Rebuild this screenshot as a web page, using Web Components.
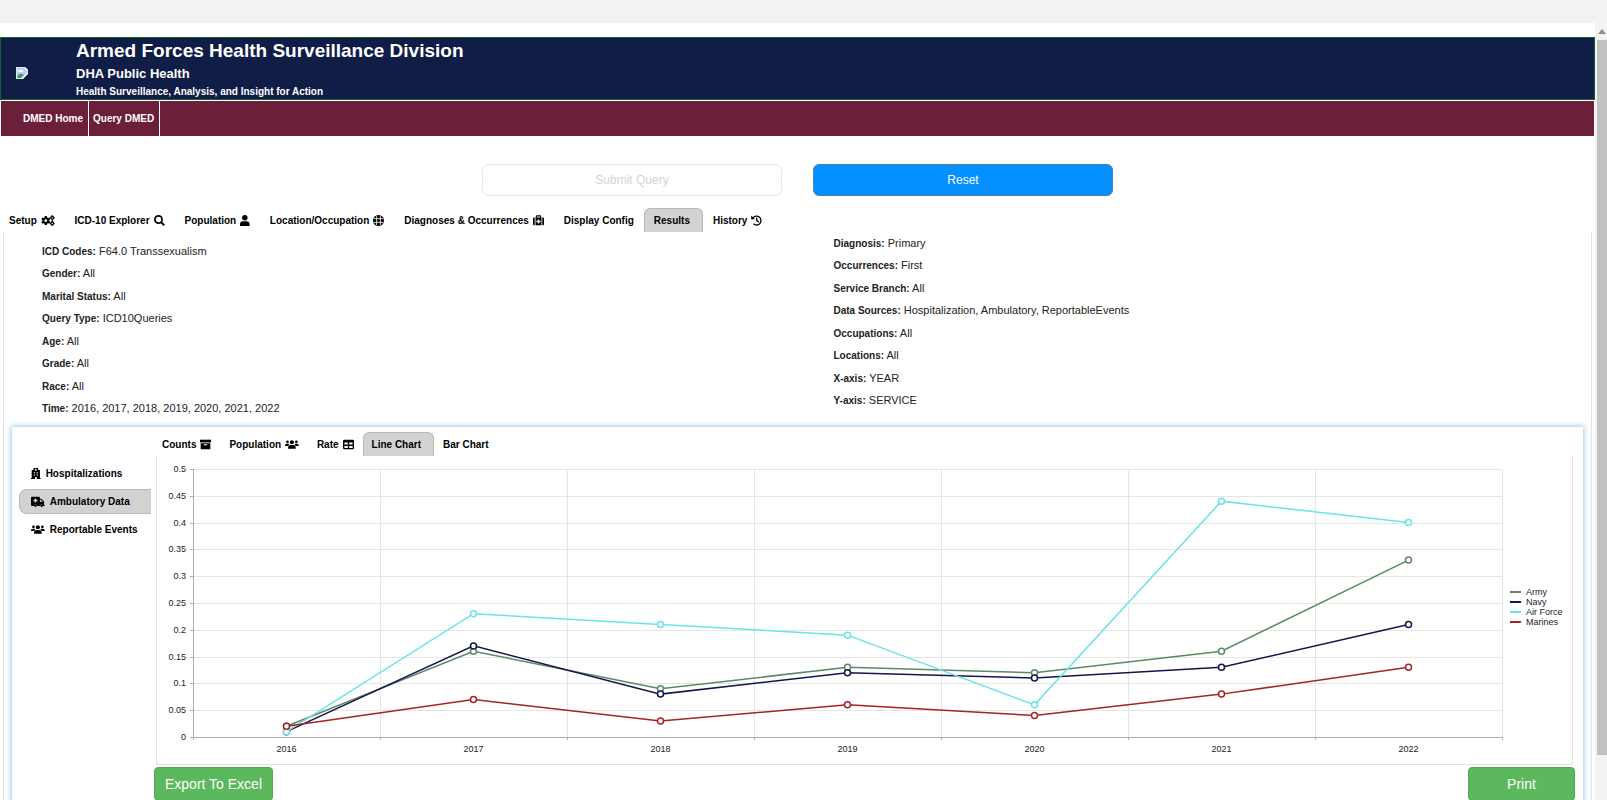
<!DOCTYPE html>
<html lang="en">
<head>
<meta charset="utf-8">
<title>DMED - Query Results</title>
<style>
    html, body {
        margin: 0;
        height: 100%;
        overflow: hidden;
        background: #fff;
        font-family: "Liberation Sans", Arial, sans-serif;
        font-size: 10px;
        color: #222;
    }
    data-card tab-strip {
        --tab-pad: 8px;
        margin-left: -3px;
    }
</style>
</head>
<body>
<app-frame>
    <site-header>
        <span slot="title">Armed Forces Health Surveillance Division</span>
        <span slot="unit">DHA Public Health</span>
        <span slot="motto">Health Surveillance, Analysis, and Insight for Action</span>
    </site-header>
    <site-nav>
        <a href="#home">DMED Home</a>
        <a href="#query">Query DMED</a>
    </site-nav>
    <query-actions></query-actions>
    <tab-strip>
        <tab-item label="Setup" icon="cogs"></tab-item>
        <tab-item label="ICD-10 Explorer" icon="search"></tab-item>
        <tab-item label="Population" icon="user"></tab-item>
        <tab-item label="Location/Occupation" icon="globe"></tab-item>
        <tab-item label="Diagnoses &amp; Occurrences" icon="medkit"></tab-item>
        <tab-item label="Display Config"></tab-item>
        <tab-item label="Results" active></tab-item>
        <tab-item label="History" icon="history"></tab-item>
    </tab-strip>
    <results-panel>
        <query-summary slot="left" id="summary-left"></query-summary>
        <query-summary slot="right" id="summary-right"></query-summary>
        <data-card>
            <side-menu slot="side"></side-menu>
            <tab-strip>
                <tab-item label="Counts" icon="archive"></tab-item>
                <tab-item label="Population" icon="users"></tab-item>
                <tab-item label="Rate" icon="table"></tab-item>
                <tab-item label="Line Chart" active></tab-item>
                <tab-item label="Bar Chart"></tab-item>
            </tab-strip>
            <line-chart></line-chart>
            <chart-actions></chart-actions>
        </data-card>
    </results-panel>
</app-frame>

<script>
// Icon shapes, all on a 16px high grid
const ICONS = {
    cogs: { w: 20, body: '<path fill-rule="evenodd" d="M5.5 1.5h3l.4 2 1.3.7 1.9-.7 1.4 2.6L12 7.400v1.400l1.500 1.300-1.400 2.600-1.900-.7-1.300.7-.4 2h-3l-.4-2-1.300-.7-1.900.7L.5 10.100 2 8.800V7.400L.5 6.100l1.400-2.600 1.900.7 1.300-.7zM7 6a2.100 2.100 0 1 0 0 4.200A2.100 2.100 0 0 0 7 6z"/><g fill="none" stroke="currentColor" stroke-width="2"><circle cx="16.300" cy="4" r="2"/><circle cx="16.300" cy="12.200" r="2"/></g><path d="M15.500 0H17v2h-1.500zM15.500 6H17v4h-1.500zM15.500 14H17v2h-1.500zM12.700 3.300h1.500v1.400h-1.500zM18.500 3.300H20v1.400h-1.500zM12.700 11.500h1.500v1.400h-1.500zM18.500 11.500H20v1.400h-1.500z"/>' },
    search: { w: 16, body: '<circle cx="6.5" cy="6.5" r="5.3" fill="none" stroke="currentColor" stroke-width="2.4"/><path d="M9.5 11.5l2-2L16 14l-2 2z"/>' },
    user: { w: 14, body: '<circle cx="7" cy="4" r="4"/><path d="M0 16v-2.500A4.500 4.500 0 0 1 4.500 9h5a4.500 4.500 0 0 1 4.500 4.500V16z"/>' },
    globe: { w: 16, body: '<circle cx="8" cy="8" r="8"/><path d="M5.300 1.200v13.600M10.700 1.200v13.600M1 5.300h14M1 10.700h14" fill="none" stroke="#fff" stroke-width="1.2"/>' },
    medkit: { w: 16, body: '<path fill-rule="evenodd" d="M4 3.5V2A1.500 1.500 0 0 1 5.500.5h5A1.500 1.500 0 0 1 12 2v1.500h.3V15H3.700V3.500zM5.500 3.500h5V2h-5zM7 6.500v2H5v2h2v2h2v-2h2v-2H9v-2z"/><path d="M0 5a1.500 1.500 0 0 1 1.500-1.500h1V15h-1A1.500 1.500 0 0 1 0 13.500zM13.500 3.500h1A1.500 1.500 0 0 1 16 5v8.500a1.500 1.500 0 0 1-1.500 1.500h-1z"/>' },
    history: { w: 16, body: '<path d="M2.8 4.2A6.500 6.500 0 1 1 4 13.200M8.300 4.500V8l2.500 2" fill="none" stroke="currentColor" stroke-width="1.9" stroke-linecap="round"/><path d="M.3.8v5.500h5.500z"/>' },
    archive: { w: 16, body: '<path d="M0 1h16v4H0z"/><path fill-rule="evenodd" d="M1 6h14v9H1zM5.500 7.500v1.600h5V7.500z"/>' },
    users: { w: 20, body: '<circle cx="10" cy="4.8" r="3"/><path d="M4.500 14v-1.500A3.800 3.800 0 0 1 8.300 8.700h3.400a3.800 3.800 0 0 1 3.800 3.800V14z"/><circle cx="3.500" cy="4" r="2"/><circle cx="16.500" cy="4" r="2"/><path d="M0 9.500a2.700 2.700 0 0 1 2.700-2.700h2.600l.8 1.500L4.500 10H0zM20 9.500a2.700 2.700 0 0 0-2.700-2.700h-2.600l-.8 1.500 1.600 1.700H20z"/>' },
    table: { w: 16, body: '<path fill-rule="evenodd" d="M2 1h12a2 2 0 0 1 2 2v10a2 2 0 0 1-2 2H2a2 2 0 0 1-2-2V3a2 2 0 0 1 2-2zM2 5v3h5V5zM9 5v3h5V5zM2 10v3h5v-3zM9 10v3h5v-3z"/>' },
    hospital: { w: 14, body: '<path fill-rule="evenodd" d="M3.500 3V1a1 1 0 0 1 1-1h5a1 1 0 0 1 1 1v2H13v11.500h1V16H8.200v-3H5.800v3H0v-1.500h1V3zM6.400 1v1h-1v1.200h1v1h1.200v-1h1V2h-1V1zM4 6v1.700h2V6zM8 6v1.700h2V6zM4 9.300V11h2V9.300zM8 9.300V11h2V9.300z"/>' },
    ambulance: { w: 20, body: '<path fill-rule="evenodd" d="M1.500 1h10A1.500 1.500 0 0 1 13 2.500V4h2l4 4v5h1v1.500h-2.200a2.300 2.300 0 0 0-4.600 0H8.800a2.300 2.300 0 0 0-4.600 0H1.500A1.500 1.500 0 0 1 0 13V2.500A1.500 1.500 0 0 1 1.500 1zM5.500 3.500v2h-2v2h2v2h2v-2h2v-2h-2v-2zM13 5.500v3h4.300l-3-3z"/><circle cx="6.500" cy="14.300" r="1.700"/><circle cx="15.500" cy="14.300" r="1.700"/>' }
};

class GlyphIcon extends HTMLElement {
    constructor() {
        super();
        this.attachShadow({ mode: 'open' });
    }

    connectedCallback() {
        const icon = ICONS[this.getAttribute('name')];
        this.shadowRoot.innerHTML = `
            <style>
                :host { display: inline-flex; }
                svg { display: block; height: 11px; fill: currentColor; }
            </style>
            <svg viewBox="0 0 ${icon.w} 16" aria-hidden="true">${icon.body}</svg>
        `;
    }
}
customElements.define('glyph-icon', GlyphIcon);

class AppFrame extends HTMLElement {
    constructor() {
        super();
        this.attachShadow({ mode: 'open' }).innerHTML = `
            <style>
                :host { display: flex; flex-direction: column; height: 100vh; }
                .strip { flex: none; height: 23px; background: #f2f2f2; }
                .view { flex: 1; display: flex; min-height: 0; }
                main { flex: 1; min-width: 0; overflow: hidden; padding-top: 14px; }
                .scrollbar {
                    flex: none; width: 10px; padding-left: 2px;
                    display: flex; flex-direction: column; background: #f3f3f3;
                }
                .arrow { flex: none; height: 17px; display: flex; align-items: center; justify-content: center; }
                .arrow svg { width: 8px; height: 5px; fill: #8f8f8f; }
                .thumb { flex: 16; background: #c1c1c1; }
                .rest { flex: 1; }
            </style>
            <div class="strip"></div>
            <div class="view">
                <main><slot></slot></main>
                <div class="scrollbar" aria-hidden="true">
                    <div class="arrow"><svg viewBox="0 0 8 5"><path d="M4 0l4 5H0z"/></svg></div>
                    <div class="thumb"></div>
                    <div class="rest"></div>
                </div>
            </div>
        `;
    }
}
customElements.define('app-frame', AppFrame);

class SiteHeader extends HTMLElement {
    constructor() {
        super();
        this.attachShadow({ mode: 'open' }).innerHTML = `
            <style>
                :host {
                    display: flex; align-items: center; box-sizing: border-box; height: 63px;
                    border: 1px solid #17602c; background: #101d47; color: #fff; font-weight: bold;
                }
                .logo { width: 44px; padding: 8px 0 0 15px; margin-right: 16px; }
                .logo svg { display: block; width: 12px; height: 12px; }
                h1, h2, p { margin: 0; font-weight: bold; }
                h1 { font-size: 19px; line-height: 25px; }
                h2 { font-size: 13px; line-height: 21px; }
                p { font-size: 10px; line-height: 15px; }
            </style>
            <div class="logo">
                <svg viewBox="0 0 12 12" role="img" aria-label="Logo">
                    <path d="M0 0h9l3 3v9H0z" fill="#dce6f5"/>
                    <path d="M1 1h8v2h2v6H1z" fill="#b9d0f2"/>
                    <path d="M2 5q0-2 2-2 2-1 3 1v1z" fill="#fff"/>
                    <path d="M1 11q1-5 5-4l2 1-3 3z" fill="#4b9a52"/>
                    <path d="M5 12l7-7v2l-5 5z" fill="#fff"/>
                    <path d="M7 12l5-5v5z" fill="#101d47"/>
                    <path d="M9 0v3h3z" fill="#fff"/>
                </svg>
            </div>
            <div>
                <h1><slot name="title"></slot></h1>
                <h2><slot name="unit"></slot></h2>
                <p><slot name="motto"></slot></p>
            </div>
        `;
    }
}
customElements.define('site-header', SiteHeader);

class SiteNav extends HTMLElement {
    constructor() {
        super();
        this.attachShadow({ mode: 'open' }).innerHTML = `
            <style>
                :host { display: block; margin: 1px 1px 0; background: #6b1f38; }
                nav { display: flex; height: 35px; padding-left: 18px; }
                ::slotted(a) {
                    display: flex; align-items: center; padding: 0 5px 0 4px;
                    border-right: 1px solid #fff; color: #fff; text-decoration: none;
                    font-size: 10px; font-weight: bold;
                }
            </style>
            <nav><slot></slot></nav>
        `;
    }
}
customElements.define('site-nav', SiteNav);

class QueryActions extends HTMLElement {
    constructor() {
        super();
        this.attachShadow({ mode: 'open' }).innerHTML = `
            <style>
                :host { display: flex; justify-content: center; gap: 31px; padding: 28px 0 12px; }
                button {
                    width: 300px; height: 32px; border-radius: 6px; padding: 0;
                    font-family: inherit; font-size: 12px;
                }
                .submit { background: #fff; border: 1px solid #e9e9e9; color: #d3d3d3; }
                .reset { background: #0490ff; border: 1px solid #4d83b3; color: #fff; }
            </style>
            <button class="submit" type="button" disabled>Submit Query</button>
            <button class="reset" type="button">Reset</button>
        `;
    }
}
customElements.define('query-actions', QueryActions);

class TabStrip extends HTMLElement {
    constructor() {
        super();
        this.attachShadow({ mode: 'open' }).innerHTML = `
            <style>
                :host { display: flex; height: 24px; margin-left: -1px; }
            </style>
            <slot></slot>
        `;
    }

    connectedCallback() {
        this.setAttribute('role', 'tablist');
    }
}
customElements.define('tab-strip', TabStrip);

class TabItem extends HTMLElement {
    constructor() {
        super();
        this.attachShadow({ mode: 'open' });
    }

    connectedCallback() {
        const icon = this.getAttribute('icon');
        const active = this.hasAttribute('active');
        const label = this.getAttribute('label').replace('&', '&amp;');
        this.shadowRoot.innerHTML = `
            <style>
                :host { display: flex; }
                button {
                    display: flex; align-items: center; gap: 4px; padding: 0 var(--tab-pad, 9px) 1px;
                    border: 1px solid transparent; border-bottom: 0; border-radius: 6px 6px 0 0;
                    background: none; color: #000; white-space: nowrap;
                    font-family: inherit; font-size: 10px; font-weight: bold;
                }
                :host([active]) button { padding-right: 12px; background: #d2d2d2; border-color: #b9b9b9; }
            </style>
            <button type="button" role="tab" aria-selected="${active}">${label}${icon ? `<glyph-icon name="${icon}"></glyph-icon>` : ''}</button>
        `;
    }
}
customElements.define('tab-item', TabItem);

class ResultsPanel extends HTMLElement {
    constructor() {
        super();
        this.attachShadow({ mode: 'open' }).innerHTML = `
            <style>
                :host {
                    display: block; margin: 0 3px; padding: 0 8px;
                    border: 1px solid #e2e2e2; border-top: 0;
                }
                .summary {
                    display: grid; grid-template-columns: 1fr 1fr; column-gap: 42px;
                    height: 195px; padding-left: 30px;
                }
                .left { padding-top: 8px; }
            </style>
            <div class="summary">
                <div class="left"><slot name="left"></slot></div>
                <div><slot name="right"></slot></div>
            </div>
            <slot></slot>
        `;
    }
}
customElements.define('results-panel', ResultsPanel);

const SUMMARY = {
    'summary-left': [
        ['ICD Codes', 'F64.0 Transsexualism'],
        ['Gender', 'All'],
        ['Marital Status', 'All'],
        ['Query Type', 'ICD10Queries'],
        ['Age', 'All'],
        ['Grade', 'All'],
        ['Race', 'All'],
        ['Time', '2016, 2017, 2018, 2019, 2020, 2021, 2022']
    ],
    'summary-right': [
        ['Diagnosis', 'Primary'],
        ['Occurrences', 'First'],
        ['Service Branch', 'All'],
        ['Data Sources', 'Hospitalization, Ambulatory, ReportableEvents'],
        ['Occupations', 'All'],
        ['Locations', 'All'],
        ['X-axis', 'YEAR'],
        ['Y-axis', 'SERVICE']
    ]
};

class QuerySummary extends HTMLElement {
    constructor() {
        super();
        this.attachShadow({ mode: 'open' });
    }

    connectedCallback() {
        const rows = SUMMARY[this.id]
            .map(([name, value]) => `<div><b>${name}:</b> ${value}</div>`)
            .join('');
        this.shadowRoot.innerHTML = `
            <style>
                :host { display: grid; grid-template-rows: repeat(8, 1fr); align-items: center; height: 180px; }
                div { font-size: 11px; line-height: 14px; }
                b { font-size: 10px; }
            </style>
            ${rows}
        `;
    }
}
customElements.define('query-summary', QuerySummary);

class DataCard extends HTMLElement {
    constructor() {
        super();
        this.attachShadow({ mode: 'open' }).innerHTML = `
            <style>
                :host {
                    display: grid; grid-template-columns: 144px minmax(0, 1fr);
                    padding: 5px 10px 40px 0; background: #fff;
                    box-shadow: 0 0 5px 1px #9cc9e4;
                }
                aside { padding: 29px 5px 0 7px; }
            </style>
            <aside><slot name="side"></slot></aside>
            <div><slot></slot></div>
        `;
    }
}
customElements.define('data-card', DataCard);

class SideMenu extends HTMLElement {
    constructor() {
        super();
        this.attachShadow({ mode: 'open' }).innerHTML = `
            <style>
                :host { display: flex; flex-direction: column; gap: 3px; }
                button {
                    display: flex; align-items: center; gap: 5px; height: 25px; padding: 0 0 0 11px;
                    border: 1px solid transparent; border-right: 0; border-radius: 8px 0 0 8px;
                    background: none; color: #000; white-space: nowrap;
                    font-family: inherit; font-size: 10px; font-weight: bold;
                }
                button:first-child { gap: 2px; }
                .active { background: #d2d2d2; border-color: #b9b9b9; }
            </style>
            <button type="button"><glyph-icon name="hospital"></glyph-icon>Hospitalizations</button>
            <button type="button" class="active"><glyph-icon name="ambulance"></glyph-icon>Ambulatory Data</button>
            <button type="button"><glyph-icon name="users"></glyph-icon>Reportable Events</button>
        `;
    }
}
customElements.define('side-menu', SideMenu);

const YEARS = [2016, 2017, 2018, 2019, 2020, 2021, 2022];
const SERIES = [
    { name: 'Army', color: '#5c8a62', values: [0.02, 0.16, 0.09, 0.13, 0.12, 0.16, 0.33] },
    { name: 'Navy', color: '#14144f', values: [0.01, 0.17, 0.08, 0.12, 0.11, 0.13, 0.21] },
    { name: 'Air Force', color: '#6be3ea', values: [0.01, 0.23, 0.21, 0.19, 0.06, 0.44, 0.4] },
    { name: 'Marines', color: '#a52323', values: [0.02, 0.07, 0.03, 0.06, 0.04, 0.08, 0.13] }
];

class LineChart extends HTMLElement {
    constructor() {
        super();
        this.attachShadow({ mode: 'open' }).innerHTML = `
            <style>
                :host { display: block; height: 308px; border: 1px solid #e2e2e2; border-top: 0; }
                svg { display: block; width: 100%; height: 308px; }
                text { font-size: 9px; fill: #222; }
                .grid { stroke: #e6e6e6; }
                .axis { stroke: #b0b0b0; }
            </style>
            <svg role="img" aria-label="Rate by year and service"></svg>
        `;
    }

    connectedCallback() {
        this.draw();
        new ResizeObserver(() => this.draw()).observe(this);
    }

    draw() {
        const left = 36;
        const top = 13;
        const bottom = 281;
        const right = this.clientWidth - 70;
        const band = (right - left) / YEARS.length;
        const x = i => left + band * (i + 0.5);
        const y = v => bottom - (v / 0.5) * (bottom - top);
        const edge = n => Math.round(n) + 0.5;
        let out = '';

        // Grid, ticks and labels of the value axis
        for (let i = 0; i <= 10; i++) {
            const gy = edge(y(i * 0.05));
            out += `<path class="grid" d="M${left} ${gy}H${right}"/>`;
            out += `<path class="axis" d="M${left - 3} ${gy}H${left}"/>`;
            out += `<text x="${left - 7}" y="${gy + 2}" text-anchor="end">${+(i * 0.05).toFixed(2)}</text>`;
        }
        for (let i = 0; i <= YEARS.length; i++) {
            const gx = edge(left + band * i);
            out += `<path class="grid" d="M${gx} ${top}V${bottom}"/>`;
            out += `<path class="axis" d="M${gx} ${bottom}v3"/>`;
        }
        out += `<path class="axis" fill="none" d="M${left + 0.5} ${top}V${bottom + 0.5}H${right}"/>`;
        YEARS.forEach((year, i) => {
            out += `<text x="${x(i)}" y="296" text-anchor="middle">${year}</text>`;
        });

        SERIES.forEach((s, n) => {
            const points = s.values.map((v, i) => `${x(i)},${y(v)}`);
            out += `<polyline points="${points.join(' ')}" fill="none" stroke="${s.color}" stroke-width="1.5"/>`;
            s.values.forEach((v, i) => {
                out += `<circle cx="${x(i)}" cy="${y(v)}" r="3" fill="#fff" stroke="${s.color}" stroke-width="1.5"/>`;
            });
            const ly = 136 + n * 10;
            out += `<path d="M${right + 8} ${ly}h11" stroke="${s.color}" stroke-width="2"/>`;
            out += `<text x="${right + 24}" y="${ly + 3}">${s.name}</text>`;
        });

        this.shadowRoot.querySelector('svg').innerHTML = out;
    }
}
customElements.define('line-chart', LineChart);

class ChartActions extends HTMLElement {
    constructor() {
        super();
        this.attachShadow({ mode: 'open' }).innerHTML = `
            <style>
                :host { display: flex; justify-content: space-between; padding-top: 2px; margin: 0 -2px; }
                button {
                    height: 34px; padding: 0 10px; border: 1px solid #4cae4c; border-radius: 4px;
                    background: #5cb85c; color: #fff; font-family: inherit; font-size: 14px;
                }
                .print { min-width: 107px; }
            </style>
            <button type="button">Export To Excel</button>
            <button type="button" class="print">Print</button>
        `;
    }
}
customElements.define('chart-actions', ChartActions);
</script>
</body>
</html>
